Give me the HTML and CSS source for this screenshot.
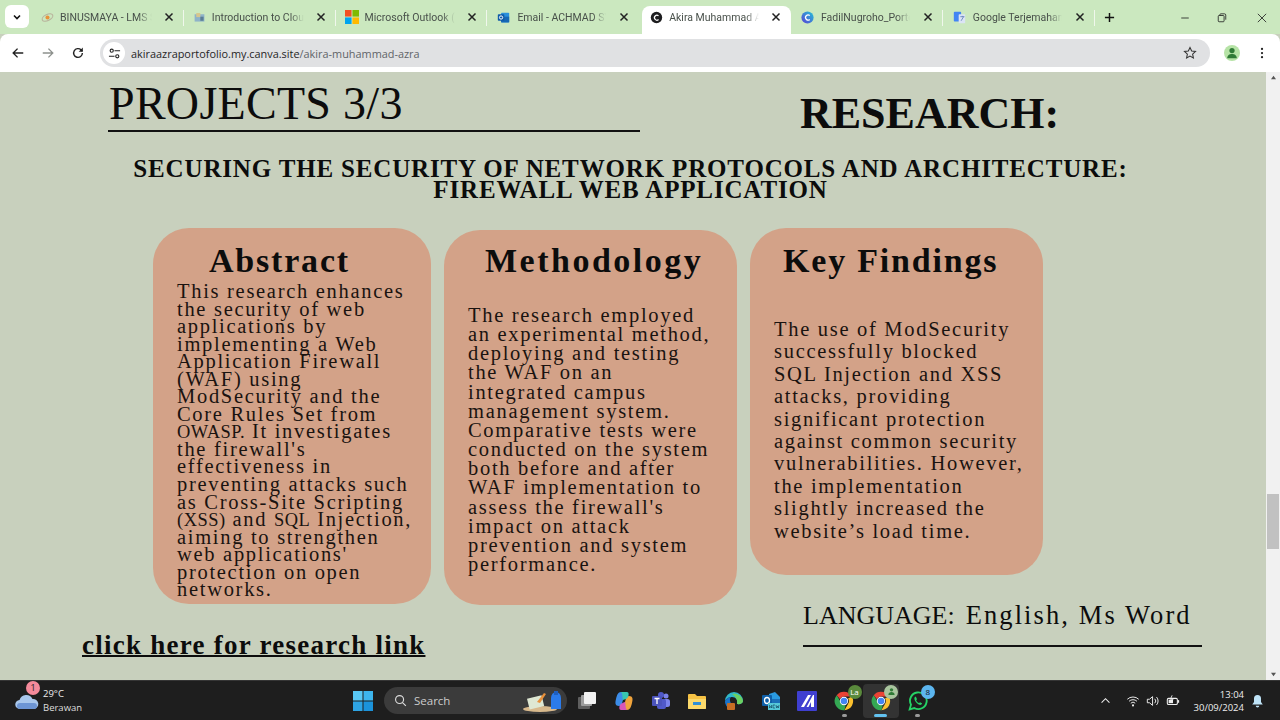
FILE: index.html
```html
<!DOCTYPE html>
<html lang="en">
<head>
<meta charset="utf-8">
<title>Akira Muhammad Azra</title>
<link rel="stylesheet" href="styles.css">
</head>
<body>
<svg class="defs" width="0" height="0">
  <symbol id="x" viewBox="0 0 10 10"><path d="M1.500 1.500l7 7M8.500 1.500l-7 7" stroke="#222" stroke-width="1.500" fill="none"/></symbol>
  <symbol id="chrome" viewBox="0 0 24 24">
    <path d="M12 1a11 11 0 0 1 9.500 5.500H12a5.500 5.500 0 0 0-5 3.200L3.300 5A11 11 0 0 1 12 1z" fill="#ea4335"/>
    <path d="M21.500 6.500A11 11 0 0 1 12.500 23l4.300-7.500A5.500 5.500 0 0 0 16.800 9z" fill="#fbc02d"/>
    <path d="M3.300 5l4.700 8.200A5.500 5.500 0 0 0 14 17l-1.500 6A11 11 0 0 1 3.300 5z" fill="#34a853"/>
    <circle cx="12" cy="12" r="5" fill="#fff"/><circle cx="12" cy="12" r="4" fill="#4285f4"/>
  </symbol>
</svg>

<header class="tabstrip">
  <button class="tabmenu"><svg width="10" height="10" viewBox="0 0 10 10"><path d="M2 3.500l3 3 3-3" stroke="#111" stroke-width="1.600" fill="none"/></svg></button>
  <div class="tab sep">
    <svg class="fav" viewBox="0 0 16 16"><ellipse cx="8" cy="8" rx="7" ry="3.800" fill="none" stroke="#b9b39c" stroke-width="1.400" transform="rotate(-25 8 8)"/><circle cx="8" cy="8" r="2.500" fill="#e8923a"/></svg>
    <span class="tabname">BINUSMAYA - LMS Student</span>
    <svg class="close"><use href="#x"/></svg>
  </div>
  <div class="tab sep">
    <svg class="fav" viewBox="0 0 16 16"><rect x="2" y="4" width="12" height="9" fill="#8fb3c9"/><rect x="4" y="2.500" width="5" height="5" fill="#d7c68d"/><rect x="9" y="7" width="4" height="5" fill="#5a7d95"/></svg>
    <span class="tabname">Introduction to Cloud Computing</span>
    <svg class="close"><use href="#x"/></svg>
  </div>
  <div class="tab sep">
    <svg class="fav ms" viewBox="0 0 16 16"><rect width="7.500" height="7.500" fill="#f25022"/><rect x="8.500" width="7.500" height="7.500" fill="#7fba00"/><rect y="8.500" width="7.500" height="7.500" fill="#00a4ef"/><rect x="8.500" y="8.500" width="7.500" height="7.500" fill="#ffb900"/></svg>
    <span class="tabname">Microsoft Outlook (sign in)</span>
    <svg class="close"><use href="#x"/></svg>
  </div>
  <div class="tab roomy">
    <svg class="fav" viewBox="0 0 16 16"><rect x="5" y="2" width="10" height="12" rx="1" fill="#2a8fdc"/><rect x="5" y="7" width="10" height="7" fill="#1668b5"/><rect x="1" y="4" width="8" height="8" rx="1" fill="#0f5aa8"/><circle cx="5" cy="8" r="2" fill="none" stroke="#fff" stroke-width="1.200"/></svg>
    <span class="tabname">Email - ACHMAD SYAHPUTRA</span>
    <svg class="close"><use href="#x"/></svg>
  </div>
  <div class="tab active">
    <svg class="fav" viewBox="0 0 16 16"><circle cx="8" cy="8" r="7" fill="#1d1d1f"/><path d="M10.500 6a3 3 0 1 0 0 4.500" stroke="#fff" stroke-width="1.500" fill="none"/></svg>
    <span class="tabname">Akira Muhammad Azra</span>
    <svg class="close"><use href="#x"/></svg>
  </div>
  <div class="tab sep roomy">
    <svg class="fav" viewBox="0 0 16 16"><defs><linearGradient id="cv" x1="0" y1="1" x2="1" y2="0"><stop offset="0" stop-color="#5b3fd6"/><stop offset="1" stop-color="#22c3d6"/></linearGradient></defs><circle cx="8" cy="8" r="7.500" fill="url(#cv)"/><path d="M10.800 5.500a3.200 3.200 0 1 0 0 5" stroke="#fff" stroke-width="1.500" fill="none"/></svg>
    <span class="tabname">FadilNugroho_Portofolio</span>
    <svg class="close"><use href="#x"/></svg>
  </div>
  <div class="tab sep roomy">
    <svg class="fav" viewBox="0 0 16 16"><rect x="1" y="1" width="9" height="12" rx="1" fill="#4285f4"/><rect x="7" y="4" width="8" height="11" rx="1" fill="#dbe4f5"/><path d="M9 7h5M11.500 6v1M10 12l3-5" stroke="#5b7bb5" stroke-width="1" fill="none"/></svg>
    <span class="tabname">Google Terjemahan</span>
    <svg class="close"><use href="#x"/></svg>
  </div>
  <svg class="plus" viewBox="0 0 12 12"><path d="M6 1v10M1 6h10" stroke="#111" stroke-width="1.600"/></svg>
  <div class="winctl">
    <svg viewBox="0 0 12 12"><path d="M1.500 6h9" stroke="#222" stroke-width="1"/></svg>
    <svg viewBox="0 0 12 12"><rect x="1.500" y="3" width="7" height="7.500" rx="1" fill="none" stroke="#222"/><path d="M3.500 3V2a1 1 0 0 1 1-1h4.500a1.500 1.500 0 0 1 1.500 1.500V8" fill="none" stroke="#222"/></svg>
    <svg viewBox="0 0 12 12"><path d="M1 1l10 10M11 1L1 11" stroke="#222" stroke-width="1"/></svg>
  </div>
</header>

<nav class="toolbar">
  <svg class="navicon" viewBox="0 0 16 16"><path d="M14 8H2.500M7.500 3l-5 5 5 5" stroke="#222" stroke-width="1.600" fill="none"/></svg>
  <svg class="navicon" viewBox="0 0 16 16"><path d="M2 8h11.500M8.500 3l5 5-5 5" stroke="#8d918d" stroke-width="1.500" fill="none"/></svg>
  <svg class="navicon" viewBox="0 0 16 16"><path d="M13 8a5 5 0 1 1-1.500-3.600L13 6" stroke="#222" stroke-width="1.600" fill="none"/><path d="M13.500 1.800v4.700H8.800z" fill="#222"/></svg>
  <div class="omnibox">
    <span class="siteinfo"><svg viewBox="0 0 14 14" width="13" height="13"><circle cx="4" cy="4" r="1.700" fill="none" stroke="#222" stroke-width="1.200"/><path d="M7 4h6M1 10h6" stroke="#222" stroke-width="1.200"/><circle cx="10" cy="10" r="1.700" fill="none" stroke="#222" stroke-width="1.200"/></svg></span>
    <span class="url"><b>akiraazraportofolio.my.canva.site</b>/akira-muhammad-azra</span>
    <svg class="star" viewBox="0 0 16 16"><path d="M8 1.800l1.900 4 4.400.5-3.300 3 .9 4.400L8 11.500l-3.900 2.200.9-4.400-3.300-3 4.400-.5z" fill="none" stroke="#333" stroke-width="1.200"/></svg>
  </div>
  <span class="avatar"><svg viewBox="0 0 16 16" width="14" height="14"><circle cx="8" cy="5.200" r="3" fill="#2f7a36"/><path d="M2.500 14c0-3.500 2.500-5 5.500-5s5.500 1.500 5.500 5z" fill="#2f7a36"/></svg></span>
  <svg class="kebab" viewBox="0 0 4 16"><circle cx="2" cy="2.500" r="1.500" fill="#222"/><circle cx="2" cy="8" r="1.500" fill="#222"/><circle cx="2" cy="13.500" r="1.500" fill="#222"/></svg>
</nav>

<div class="viewport">
  <main class="canvas">
    <div class="head">
      <h2 class="projects">PROJECTS 3/3</h2>
      <h1 class="research">RESEARCH:</h1>
    </div>
    <h3 class="title">SECURING THE SECURITY OF NETWORK PROTOCOLS AND ARCHITECTURE:<br>FIREWALL WEB APPLICATION</h3>
    <section class="cards">
      <article class="card abstract">
        <h4>Abstract</h4>
        <p>This research enhances<br>the security of web<br>applications by<br>implementing a Web<br>Application Firewall<br>(WAF) using<br>ModSecurity and the<br>Core Rules Set from<br><span class="caps">OWASP.</span> It investigates<br>the firewall's<br>effectiveness in<br>preventing attacks such<br>as Cross-Site Scripting<br><span class="caps">(XSS)</span> and <span class="caps">SQL</span> Injection,<br>aiming to strengthen<br>web applications'<br>protection on open<br>networks.</p>
      </article>
      <article class="card method">
        <h4>Methodology</h4>
        <p>The research employed<br>an experimental method,<br>deploying and testing<br>the WAF on an<br>integrated campus<br>management system.<br>Comparative tests were<br>conducted on the system<br>both before and after<br>WAF implementation to<br>assess the firewall's<br>impact on attack<br>prevention and system<br>performance.</p>
      </article>
      <article class="card findings">
        <h4>Key Findings</h4>
        <p>The use of ModSecurity<br>successfully blocked<br>SQL Injection and XSS<br>attacks, providing<br>significant protection<br>against common security<br>vulnerabilities. However,<br>the implementation<br>slightly increased the<br>website’s load time.</p>
      </article>
    </section>
    <div class="foot">
      <a class="link">click here for research link</a>
      <p class="language"><span class="langlabel">LANGUAGE:</span>English, Ms Word</p>
    </div>
  </main>
  <aside class="scrollbar">
    <svg class="arrow" viewBox="0 0 8 6"><path d="M4 1l3 4H1z" fill="#555"/></svg>
    <span class="thumb"></span>
    <svg class="arrow" viewBox="0 0 8 6"><path d="M4 5l3-4H1z" fill="#555"/></svg>
  </aside>
</div>

<footer class="taskbar">
  <div class="weather">
    <svg class="cloud" viewBox="0 0 24 18"><path d="M5 17a4.500 4.500 0 0 1-.5-9 7 7 0 0 1 13-1 5 5 0 0 1 1.500 10z" fill="#a9c7ec"/><path d="M5 17a3 3 0 0 1 0-6h14a3 3 0 0 1 0 6z" fill="#6d95d4"/></svg>
    <span class="badge red">1</span>
    <div class="wtext"><span>29°C</span><span class="dim">Berawan</span></div>
  </div>
  <div class="center">
    <svg class="win" viewBox="0 0 20 20"><rect width="9.500" height="9.500" fill="#59c8f5"/><rect x="10.500" width="9.500" height="9.500" fill="#3db5ee"/><rect y="10.500" width="9.500" height="9.500" fill="#2ea4e4"/><rect x="10.500" y="10.500" width="9.500" height="9.500" fill="#1b92da"/></svg>
    <div class="search">
      <svg viewBox="0 0 14 14" width="13" height="13"><circle cx="6" cy="6" r="4.300" fill="none" stroke="#ddd" stroke-width="1.200"/><path d="M9.200 9.200l3.600 3.600" stroke="#ddd" stroke-width="1.200"/></svg>
      <span>Search</span>
      <svg class="deco" viewBox="0 0 40 22"><ellipse cx="17" cy="19" rx="17" ry="3" fill="#d8b98c"/><rect x="5" y="7" width="15" height="11" fill="#dfe8d3" transform="rotate(-14 12 12)"/><path d="M14 12l7-9 2 1-6 9z" fill="#e8913c"/><path d="M28 19V8a5 6 0 0 1 10 0v11z" fill="#2b7bea"/><rect x="31" y="1" width="4" height="4" fill="#1e5fc0"/></svg>
    </div>
    <span class="tb"><svg viewBox="0 0 20 20"><rect x="1" y="6" width="12" height="12" rx="1" fill="#5f5f5f"/><rect x="4" y="4" width="11" height="11" rx="1" fill="#9d9d9d"/><rect x="7" y="1" width="12" height="12" rx="1" fill="#f2f2f2"/></svg></span>
    <span class="tb"><svg viewBox="0 0 20 20"><path d="M7 1c-3 0-4 3-5 7s-1 7 3 7c3 0 3-3 4-6 1-3 2-8-2-8z" fill="#3c8ce8"/><path d="M13 19c3 0 4-3 5-7s1-7-3-7c-3 0-3 3-4 6-1 3-2 8 2 8z" fill="#f0a43c"/><path d="M7 1h6c2 0 2 3 1 5-1 2-3 2-5 3-1-3 0-6-2-8z" fill="#38c6b0"/><path d="M13 19H7c-2 0-2-3-1-5 1-2 3-2 5-3 1 3 0 6 2 8z" fill="#d856b8"/></svg></span>
    <span class="tb"><svg viewBox="0 0 20 20"><circle cx="15" cy="5" r="2.500" fill="#7b83eb"/><rect x="12" y="8" width="7" height="8" rx="2.500" fill="#7b83eb"/><circle cx="10" cy="4" r="3" fill="#5059c9"/><rect x="6" y="8" width="9" height="10" rx="2" fill="#5059c9"/><rect x="1" y="5" width="10" height="10" rx="1" fill="#4b53bc"/><path d="M3.500 7.500h5M6 7.500v5.500" stroke="#fff" stroke-width="1.300"/></svg></span>
    <span class="tb"><svg viewBox="0 0 20 20"><path d="M1 4a1 1 0 0 1 1-1h6l2 2h8a1 1 0 0 1 1 1v11a1 1 0 0 1-1 1H2a1 1 0 0 1-1-1z" fill="#f6c244"/><path d="M1 8h18v9a1 1 0 0 1-1 1H2a1 1 0 0 1-1-1z" fill="#fbd96b"/><rect x="6" y="11" width="8" height="3" fill="#2f8fd6"/></svg></span>
    <span class="tb"><svg viewBox="0 0 20 20"><path d="M1 10a9 9 0 0 1 18 0c0 2.500-3 3.500-6 3 1-4-1-7-5-7-3 0-5.500 1.500-7 4z" fill="#2fb7c9"/><path d="M8 3c4-1 10 1 11 7 0 2.500-3 3.500-6 3 1-5-2-8-5-10z" fill="#6cd161"/><path d="M1 10c1.500-2.500 4-4 6-4C5 8 6 12 9 15l-3 3C3 17 .8 13 1 10z" fill="#1a73c9"/><rect x="3" y="12" width="8" height="7" rx="1" fill="#c66d24"/></svg></span>
    <span class="tb"><svg viewBox="0 0 20 20"><path d="M8 3l6-2 5 5v11H8z" fill="#2a9ae0"/><path d="M8 8h11v9H8z" fill="#1b6fb8"/><rect x="1" y="4" width="10" height="11" rx="1" fill="#0f5fa8"/><ellipse cx="6" cy="9.500" rx="2.500" ry="3" fill="none" stroke="#fff" stroke-width="1.300"/><rect x="7" y="12" width="12" height="7" fill="#56c8d8"/><path d="M8.500 14v3l1-1.500 1 1.500v-3M12 14h2M12 17h2M12 14v3M15 14l.7 3 .8-2 .8 2 .7-3" stroke="#0f3a55" stroke-width=".6" fill="none"/></svg></span>
    <span class="tb"><svg viewBox="0 0 20 20"><rect width="20" height="20" rx="1" fill="#3f3fd0"/><path d="M4 16L11 4h3L7 16zM9.500 16L16 4h1v12h-3v-5l-2.500 5z" fill="#fff"/></svg></span>
    <span class="tb pinned"><svg viewBox="0 0 24 24"><use href="#chrome"/></svg><i class="badge green">La</i><i class="run"></i></span>
    <span class="tb pinned current"><svg viewBox="0 0 24 24"><use href="#chrome"/></svg><i class="badge sage"><svg viewBox="0 0 16 16" width="9" height="9"><circle cx="8" cy="5" r="3" fill="#2f7a36"/><path d="M2.500 14c0-3.500 2.500-5 5.500-5s5.500 1.500 5.500 5z" fill="#2f7a36"/></svg></i><i class="run blue"></i></span>
    <span class="tb pinned"><svg viewBox="0 0 24 24"><path d="M2 22l1.600-5.600A10 10 0 1 1 7.500 20.400z" fill="none" stroke="#25d366" stroke-width="2.200"/><path d="M8.500 7c-1 1-1.200 2.500-.2 4.500s3 4 5.200 5c1.500.5 3 0 3.500-1.500l-2.500-1.500-1.200 1c-1.500-.6-2.800-2-3.500-3.500l1-1.200L9.500 7z" fill="#25d366"/></svg><i class="badge sky">8</i><i class="run"></i></span>
  </div>
  <div class="tray">
    <svg class="chev" viewBox="0 0 12 8"><path d="M1.500 6.500L6 2l4.500 4.500" stroke="#eee" stroke-width="1.200" fill="none"/></svg>
    <svg class="tr" viewBox="0 0 16 16"><path d="M1.500 6a9.500 9.500 0 0 1 13 0M3.500 8.300a6.500 6.500 0 0 1 9 0M5.500 10.500a3.500 3.500 0 0 1 5 0" stroke="#eee" stroke-width="1.100" fill="none"/><circle cx="8" cy="13" r="1.200" fill="#eee"/></svg>
    <svg class="tr" viewBox="0 0 16 16"><path d="M1.500 6v4h2.500l3.500 3V3L4 6z" fill="none" stroke="#eee" stroke-width="1.100"/><path d="M10 5.500a3.500 3.500 0 0 1 0 5M12 3.500a6.500 6.500 0 0 1 0 9" stroke="#eee" stroke-width="1.100" fill="none"/></svg>
    <svg class="tr" viewBox="0 0 16 16"><rect x="1.500" y="5" width="11.500" height="7" rx="1.500" fill="none" stroke="#eee" stroke-width="1.200"/><rect x="3" y="6.500" width="5" height="4" fill="#eee"/><rect x="13.500" y="7" width="1.500" height="3" fill="#eee"/><path d="M7 1.500L5 6h3l-1.500 4" stroke="#eee" stroke-width="1" fill="none"/></svg>
    <div class="clock"><span>13:04</span><span>30/09/2024</span></div>
    <svg class="bell" viewBox="0 0 14 16"><path d="M7 1a4 4 0 0 1 4 4v4l2 3H1l2-3V5a4 4 0 0 1 4-4z" fill="#bfe3f7"/><path d="M5 13.500h4a2 2 0 0 1-4 0z" fill="#bfe3f7"/></svg>
  </div>
</footer>
</body>
</html>
```
FILE: styles.css
```css
* { box-sizing: border-box; }
html, body { margin: 0; height: 100%; }
body {
  width: 1280px;
  height: 720px;
  overflow: hidden;
  display: flex;
  flex-direction: column;
  font-family: "Open Sans", "Noto Sans", sans-serif;
  background: #c8d0bd;
}
.defs { position: absolute; }
h1, h2, h3, h4, p { margin: 0; font-weight: inherit; }

/* Browser chrome */
.tabstrip {
  height: 34px;
  flex: none;
  background: #cbe8bf;
  display: flex;
  align-items: flex-end;
  padding-left: 5px;
}
.tabmenu {
  width: 24px;
  height: 23px;
  margin: 0 3px 6px 0;
  border: 0;
  padding: 0;
  border-radius: 6px;
  background: #fff;
  display: flex;
  align-items: center;
  justify-content: center;
}
.tab {
  width: 151.800px;
  height: 28px;
  flex: none;
  position: relative;
  display: flex;
  align-items: center;
  gap: 6px;
  padding: 0 10px 6px 9px;
  border-radius: 8px 8px 0 0;
}
.tab.roomy { padding-left: 10px; gap: 7px; }
.tab.sep::after {
  content: "";
  position: absolute;
  right: 0;
  top: 4px;
  width: 1px;
  height: 16px;
  background: #f0f7ec;
}
.tab.active { background: #fff; width: 148.800px; margin-left: 3px; padding-left: 8px; }
.fav { width: 13px; height: 13px; flex: none; }
.fav.ms { width: 14px; height: 14px; }
.tabname {
  flex: 1;
  min-width: 0;
  overflow: hidden;
  white-space: nowrap;
  font-family: "Roboto", "Open Sans", sans-serif;
  font-size: 10.500px;
  line-height: 14px;
  margin-top: 1px;
  color: #48504a;
  -webkit-mask-image: linear-gradient(90deg, #000 85%, transparent 100%);
  mask-image: linear-gradient(90deg, #000 85%, transparent 100%);
}
.close { width: 10px; height: 10px; flex: none; margin-left: 6px; }
.plus { width: 11px; height: 11px; margin: 0 0 11px 9px; flex: none; }
.winctl {
  margin-left: auto;
  display: flex;
  gap: 27px;
  padding-right: 13px;
  margin-bottom: 11px;
}
.winctl svg { width: 10px; height: 10px; }
.winctl svg:nth-child(3) { margin-left: 3px; }

.toolbar {
  height: 38px;
  flex: none;
  background: #fff;
  display: flex;
  align-items: center;
  padding: 0 13px 0 11px;
  border-radius: 8px 8px 0 0;
}
.navicon { width: 14px; height: 14px; flex: none; margin-right: 16px; }
.omnibox {
  width: 1110px;
  height: 28px;
  margin-left: -1px;
  border-radius: 14px;
  background: #e0e1e3;
  display: flex;
  align-items: center;
  padding: 0 13px 0 3px;
}
.siteinfo {
  width: 22px;
  height: 22px;
  border-radius: 50%;
  background: #fff;
  display: flex;
  align-items: center;
  justify-content: center;
}
.url { margin-left: 6px; font-size: 10.900px; color: #5f6368; flex: 1; white-space: nowrap; }
.url b { font-weight: 400; color: #1f1f1f; }
.star { width: 14px; height: 14px; }
.avatar {
  width: 16px;
  height: 16px;
  margin-left: 14px;
  border-radius: 50%;
  background: #b6e3a6;
  display: flex;
  align-items: center;
  justify-content: center;
}
.kebab { width: 4px; height: 12px; margin-left: 20px; flex: none; }

/* Page */
.viewport { flex: 1; min-height: 0; display: flex; background: #c8d0bd; }
.canvas {
  flex: 1;
  min-width: 0;
  font-family: "Liberation Serif", "Times New Roman", serif;
  color: #0c0c0c;
}
.head { height: 60px; display: flex; padding-left: 108px; }
.projects {
  width: 532px;
  height: 60px;
  padding-top: 6px;
  padding-left: 1px;
  border-bottom: 2px solid #111;
  font-size: 46px;
  line-height: 52px;
  letter-spacing: .300px;
  white-space: nowrap;
}
.research {
  margin: 16px 0 0 160px;
  font-size: 44px;
  line-height: 52px;
  font-weight: 700;
  letter-spacing: 0;
  white-space: nowrap;
}
.title {
  margin-top: 26px;
  padding-right: 5px;
  text-align: center;
  font-size: 25px;
  line-height: 21px;
  font-weight: 700;
  letter-spacing: .840px;
  white-space: nowrap;
}
.cards { margin-top: 28px; padding-left: 153px; display: flex; gap: 13px; align-items: flex-start; }
.card { background: #d3a288; border-radius: 36px; padding: 0 0 0 24px; }
.card h4 {
  font-size: 34px;
  line-height: 40px;
  font-weight: 700;
  letter-spacing: 1.800px;
  padding-top: 13px;
  box-sizing: content-box;
}
.card p { font-size: 20.500px; letter-spacing: 1.700px; white-space: nowrap; color: #1a1310; }
.caps { font-size: .9em; letter-spacing: .500px; line-height: 0; }
.abstract { width: 278px; height: 376px; }
.abstract h4 { padding-left: 32px; height: 42px; }
.abstract p { line-height: 17.550px; }
.method { width: 293px; height: 375px; margin-top: 2px; }
.method h4 { padding-left: 17px; height: 65px; padding-top: 11px; letter-spacing: 2.500px; }
.method p { line-height: 19.150px; }
.findings { width: 293px; height: 347px; }
.findings h4 { padding-left: 9px; height: 77px; }
.findings p { line-height: 22.400px; }
.foot { display: flex; height: 76px; padding-left: 82px; }
.link {
  margin-top: 24px;
  font-size: 27px;
  line-height: 32px;
  font-weight: 700;
  letter-spacing: 1.250px;
  text-decoration: underline;
  text-decoration-thickness: 2px;
  white-space: nowrap;
  height: 32px;
}
.language {
  margin: -6px 64px 0 auto;
  width: 399px;
  height: 48px;
  border-bottom: 2px solid #111;
  font-size: 26.500px;
  line-height: 32px;
  letter-spacing: 2.100px;
  white-space: nowrap;
}
.langlabel { letter-spacing: 0; margin-right: 11px; font-size: 26px; }

.scrollbar {
  width: 14px;
  flex: none;
  background: #f1f1f1;
  display: flex;
  flex-direction: column;
  align-items: center;
  position: relative;
  justify-content: space-between;
  padding: 3px 0;
}
.arrow { width: 7px; height: 5px; }
.thumb {
  position: absolute;
  top: 422px;
  left: 1px;
  width: 12px;
  height: 55px;
  background: #c1c1c1;
}

/* Taskbar */
.taskbar {
  height: 40px;
  flex: none;
  background: #1e1e1e;
  border-top: 1px solid #353535;
  display: flex;
  align-items: center;
  color: #eee;
  position: relative;
}
.weather { width: 351px; display: flex; align-items: center; padding-left: 15px; position: relative; flex: none; }
.cloud { width: 24px; height: 20px; flex: none; }
.badge {
  position: absolute;
  border-radius: 50%;
  font-style: normal;
  display: flex;
  align-items: center;
  justify-content: center;
  font-size: 9px;
  width: 14px;
  height: 14px;
}
.badge.red { background: #f58a9b; color: #222; left: 26px; top: -6px; }
.wtext { display: flex; flex-direction: column; margin-left: 4px; font-size: 9.500px; line-height: 14px; }
.dim { color: #ddd; }
.center { display: flex; align-items: center; }
.win { width: 20px; height: 20px; flex: none; margin-right: 11px; margin-left: 2px; }
.search {
  width: 183px;
  height: 27px;
  border-radius: 14px;
  background: #3b3b3b;
  display: flex;
  align-items: center;
  padding: 0 4px 0 10px;
  font-size: 11.500px;
  color: #ccc;
  gap: 7px;
  margin-right: 2px;
}
.deco { width: 40px; height: 22px; margin-left: auto; }
.tb {
  width: 36.700px;
  height: 34px;
  flex: none;
  display: flex;
  align-items: center;
  justify-content: center;
  position: relative;
  border-radius: 4px;
}
.tb > svg { width: 20px; height: 20px; }
.pinned .badge { top: 1px; right: 1px; color: #fff; font-size: 8px; }
.badge.green { background: #5a8a3c; }
.badge.sage { background: #a9c59e; }
.badge.sky { background: #5cb6ef; color: #111 !important; }
.current { background: #333; }
.run {
  position: absolute;
  bottom: 1px;
  left: 50%;
  width: 5px;
  height: 2.500px;
  margin-left: -2.500px;
  border-radius: 2px;
  background: #9a9a9a;
}
.run.blue { width: 13px; margin-left: -6.500px; background: #63c2f0; }
.tray { margin-left: auto; display: flex; align-items: center; padding-right: 16px; }
.chev { width: 11px; height: 7px; margin-right: 15px; }
.tr { width: 14px; height: 14px; margin-right: 6px; }
.clock {
  display: flex;
  flex-direction: column;
  align-items: flex-end;
  font-size: 9.500px;
  line-height: 13px;
  margin-left: 8px;
  color: #eee;
}
.bell { width: 13px; height: 14px; margin-left: 7px; }
```
